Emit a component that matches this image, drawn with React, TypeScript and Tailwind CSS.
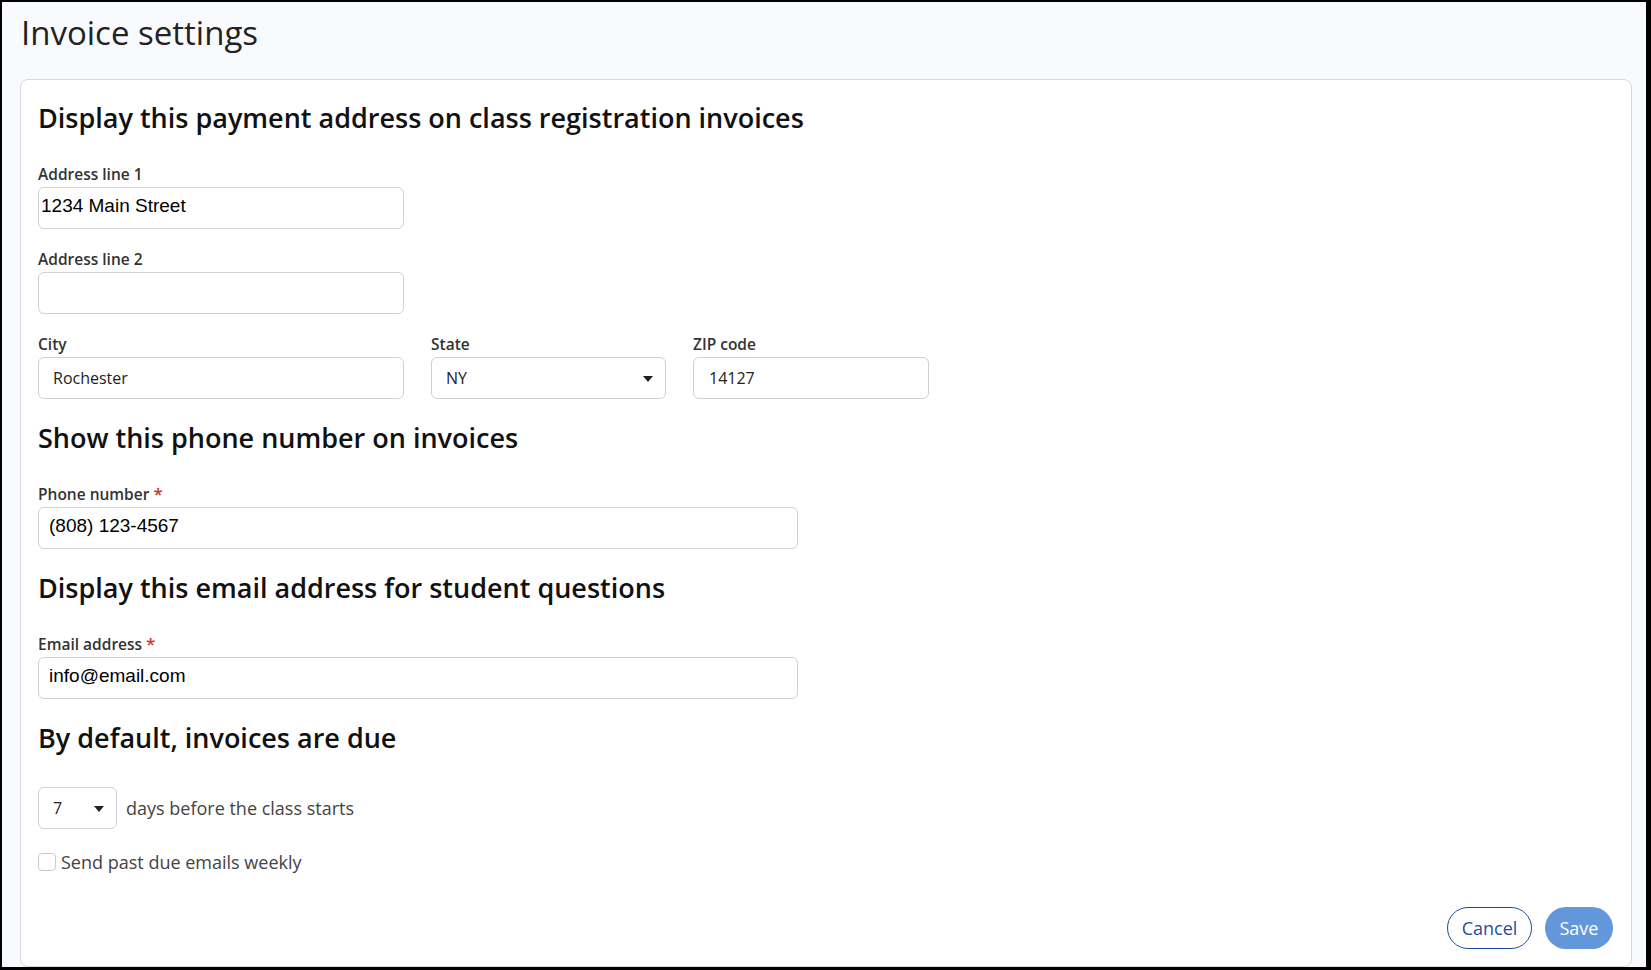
import type { ReactNode } from 'react'

const sans = "font-['Open_Sans','Noto_Sans',sans-serif]"
const arial = "font-['Liberation_Sans',Arial,sans-serif]"

function Label({ children, required }: { children: ReactNode; required?: boolean }) {
  return (
    <div className="h-[20px] mb-[3px] text-[15.5px] leading-[20px] font-semibold text-[#333]">
      {children}
      {required && <span className="ml-[4px] text-[17px] text-[#c7362b]">*</span>}
    </div>
  )
}

function TextField({ value, width, arialText, pad }: { value: string; width: string; arialText?: boolean; pad: string }) {
  return (
    <input
      readOnly
      value={value}
      className={`${width} ${pad} h-[42px] rounded-[6px] border border-[#cdd2d8] bg-white outline-none ${arialText ? `${arial} text-[19px] pb-[4px] text-black` : `${sans} text-[16px] text-[#222]`}`}
    />
  )
}

function FakeSelect({ value, width }: { value: string; width: string }) {
  return (
    <div className={`${width} relative h-[42px] rounded-[6px] border border-[#cdd2d8] bg-white flex items-center pl-[14px] text-[16px] text-[#222]`}>
      {value}
      {/* caret */}
      <span className="absolute right-[12px] top-[18px] w-0 h-0 border-l-[5px] border-r-[5px] border-t-[6px] border-l-transparent border-r-transparent border-t-[#222]" />
    </div>
  )
}

function Heading({ children }: { children: ReactNode }) {
  return <h2 className="text-[27px] leading-[36px] font-semibold text-[#111] mb-[28px]">{children}</h2>
}

export default function App() {
  return (
    <div className={`${sans} h-screen bg-black pt-[2px] pl-[2px] pr-[5px] pb-[3px]`}>
      <div className="h-full bg-[#f9fafd] flex flex-col">
        <h1 className="pl-[19px] pt-[11px] text-[33px] leading-[40px] text-[#222] mb-[26px]">Invoice settings</h1>

        <div className="flex-1 ml-[18px] mr-[14px] bg-white border border-[#d6dadf] rounded-[8px] pt-[20px] pl-[17px] pr-[18px] pb-[17px] flex flex-col">
          {/* Payment address */}
          <Heading>Display this payment address on class registration invoices</Heading>

          <Label>Address line 1</Label>
          <TextField value="1234 Main Street" width="w-[366px]" arialText pad="px-[2px]" />

          <div className="mt-[20px]">
            <Label>Address line 2</Label>
            <TextField value="" width="w-[366px]" pad="px-[14px]" />
          </div>

          <div className="mt-[20px] flex gap-[27px]">
            <div>
              <Label>City</Label>
              <TextField value="Rochester" width="w-[366px]" pad="px-[14px]" />
            </div>
            <div>
              <Label>State</Label>
              <FakeSelect value="NY" width="w-[235px]" />
            </div>
            <div>
              <Label>ZIP code</Label>
              <TextField value="14127" width="w-[236px]" pad="px-[15px]" />
            </div>
          </div>

          {/* Phone */}
          <div className="mt-[21px]">
            <Heading>Show this phone number on invoices</Heading>
            <Label required>Phone number</Label>
            <TextField value="(808) 123-4567" width="w-[760px]" arialText pad="px-[10px]" />
          </div>

          {/* Email */}
          <div className="mt-[21px]">
            <Heading>Display this email address for student questions</Heading>
            <Label required>Email address</Label>
            <TextField value="info@email.com" width="w-[760px]" arialText pad="px-[10px]" />
          </div>

          {/* Due date */}
          <div className="mt-[21px]">
            <h2 className="text-[27px] leading-[36px] font-semibold text-[#111] mb-[31px]">By default, invoices are due</h2>
            <div className="flex items-center gap-[9px]">
              <FakeSelect value="7" width="w-[79px]" />
              <span className="text-[18px] text-[#444]">days before the class starts</span>
            </div>
            <label className="mt-[21px] flex items-center gap-[5px] text-[18px] leading-[24px] text-[#444]">
              <span className="w-[18px] h-[18px] rounded-[4px] border border-[#c8ccd2] bg-white" />
              Send past due emails weekly
            </label>
          </div>

          <div className="mt-auto flex justify-end gap-[13px]">
            <button className="w-[85px] h-[42px] rounded-full border border-[#1f4f9c] text-[18px] text-[#1f4f9c] bg-white">
              Cancel
            </button>
            <button className="w-[68px] h-[42px] rounded-full bg-[#6297db] text-[18px] text-white">Save</button>
          </div>
        </div>
      </div>
    </div>
  )
}
